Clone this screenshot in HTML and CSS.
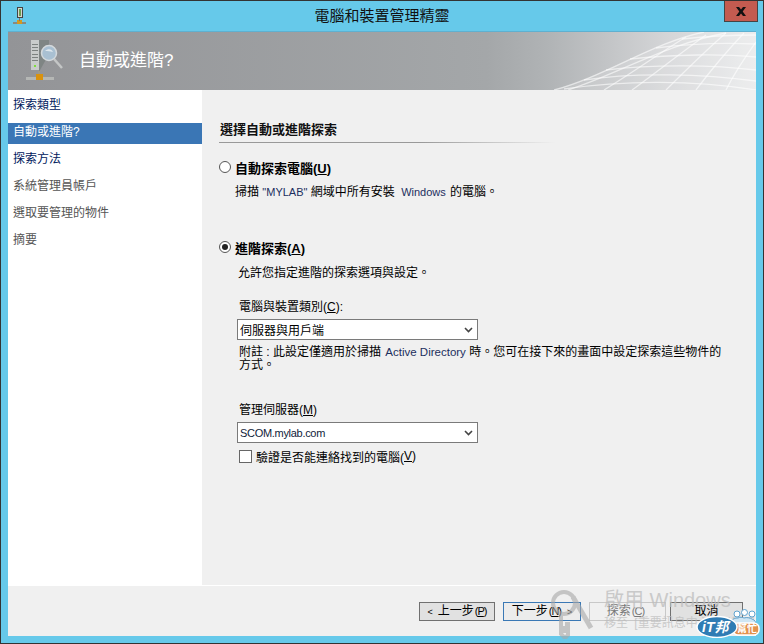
FILE: index.html
```html
<!DOCTYPE html>
<html lang="zh-Hant">
<head>
<meta charset="utf-8">
<title>電腦和裝置管理精靈</title>
<link rel="stylesheet" href="styles.css">
</head>
<body>
<div class="window">
  <div class="titlebar">
    <svg class="app-icon" width="14" height="18" viewBox="0 0 14 18">
      <rect x="4.500" y="0.500" width="5" height="10" fill="#d8d8d0" stroke="#444"/>
      <rect x="6" y="2" width="2" height="7" fill="#6a9a50"/>
      <rect x="0" y="15" width="13" height="2" fill="#8a8a80"/>
      <rect x="4" y="13" width="5" height="4" fill="#d49a20"/>
      <rect x="6" y="11" width="1" height="3" fill="#777"/>
    </svg>
    <div class="title">電腦和裝置管理精靈</div>
    <div class="close"><svg width="12" height="9" viewBox="0 0 12 9"><path d="M1 0h3l2 2.500L8 0h3L7.700 4.500 11 9H8L6 6.500 4 9H1l3.300-4.500z" fill="#111"/></svg></div>
  </div>
  <div class="client">
    <header class="banner">
      <svg class="banner-icon" width="38" height="44" viewBox="0 0 38 44">
        <path d="M5 0h8v30H5z" fill="#c9cccb"/>
        <path d="M13 0h10v14L13 32z" fill="#7f8584"/>
        <g fill="#7d8280"><rect x="6" y="4" width="6" height="1"/><rect x="6" y="7" width="6" height="1"/><rect x="6" y="10" width="6" height="1"/><rect x="6" y="14" width="6" height="1"/><rect x="6" y="17" width="6" height="1"/><rect x="6" y="20" width="6" height="1"/></g>
        <rect x="8" y="25" width="2" height="2" fill="#7ee03a"/>
        <path d="M28 19l8 9" stroke="#c4c6c6" stroke-width="2.500"/>
        <circle cx="23" cy="13" r="7.500" fill="#a9c0d2" stroke="#d4d9dc" stroke-width="1.500"/>
        <path d="M19 11c3-3 7-2 8 1-3-1-5-1-8-1z" fill="#dfe8ee"/>
        <rect x="12" y="31" width="2" height="6" fill="#a09a86"/>
        <rect x="0" y="37" width="28" height="3" fill="#b5b7b5"/>
        <rect x="10" y="34" width="7" height="6" fill="#d9920e"/>
      </svg>
      <h1 class="banner-title">自動或進階?</h1>
      <svg class="mesh" width="202" height="58" viewBox="0 0 202 58" fill="none" stroke="#fff">
        <path d="M0 58C50 45 100 10 150 0H202V58z" fill="#fff" fill-opacity=".16" stroke="none"/>
        <g stroke-opacity=".6" stroke-width="1.300">
          <path d="M0 58C50 45 100 10 150 0"/>
          <path d="M14 58C60 44 112 12 172 1"/>
          <path d="M10 57C70 48 140 48 202 58"/>
          <path d="M30 48C80 40 150 42 202 49"/>
          <path d="M52 38C100 32 160 33 202 38"/>
          <path d="M76 27C120 22 170 22 202 25"/>
          <path d="M102 16C140 11 180 11 202 12"/>
          <path d="M128 7C155 4 185 3 202 3"/>
          <path d="M50 58C80 40 110 18 132 5"/>
          <path d="M78 58C100 42 128 20 152 3"/>
          <path d="M112 58C128 42 150 20 172 1"/>
          <path d="M142 58C154 42 172 20 190 1"/>
          <path d="M172 58C180 42 192 24 202 10"/>
        </g>
      </svg>
    </header>
    <div class="body">
      <nav class="nav">
        <div class="nav-item active">探索類型</div>
        <div class="nav-item selected">自動或進階?</div>
        <div class="nav-item active">探索方法</div>
        <div class="nav-item">系統管理員帳戶</div>
        <div class="nav-item">選取要管理的物件</div>
        <div class="nav-item">摘要</div>
      </nav>
      <main class="main">
        <h2 class="section-title">選擇自動或進階探索</h2>
        <div class="section-rule"></div>
        <label class="radio-row first"><span class="radio"></span><b>自動探索電腦(<u>U</u>)</b></label>
        <p class="desc">掃描 <span class="latin">"MYLAB"</span> 網域中所有安裝 <span class="latin win">Windows</span> 的電腦。</p>
        <label class="radio-row second"><span class="radio on"></span><b>進階探索(<u>A</u>)</b></label>
        <p class="desc indent">允許您指定進階的探索選項與設定。</p>
        <div class="field-label category">電腦與裝置類別(<u>C</u>):</div>
        <div class="select"><span>伺服器與用戶端</span><svg width="9" height="6" viewBox="0 0 9 6"><path d="M1 1l3.500 3.500L8 1" fill="none" stroke="#444" stroke-width="1.600"/></svg></div>
        <p class="note">附註 : 此設定僅適用於掃描 <span class="latin ad">Active Directory</span> 時。您可在接下來的畫面中設定探索這些物件的方式。</p>
        <div class="field-label server">管理伺服器(<u>M</u>)</div>
        <div class="select"><span class="select-latin">SCOM.mylab.com</span><svg width="9" height="6" viewBox="0 0 9 6"><path d="M1 1l3.500 3.500L8 1" fill="none" stroke="#444" stroke-width="1.600"/></svg></div>
        <label class="check-row"><span class="check"></span>驗證是否能連絡找到的電腦(<u>V</u>)</label>
      </main>
    </div>
    <footer class="footer">
      <button class="btn back"><span class="angle">&lt;</span>上一步<span class="key">(<u>P</u>)</span></button>
      <button class="btn next">下一步<span class="key">(<u>N</u>)</span><span class="angle after">&gt;</span></button>
      <button class="btn disabled">探索<span class="key">(<u>C</u>)</span></button>
      <button class="btn cancel">取消</button>
    </footer>
  </div>
  <svg class="wm-key" width="50" height="50" viewBox="0 0 50 50" fill="none" stroke="#a8a8a8" stroke-width="4">
    <circle cx="17" cy="14" r="11"/>
    <path d="M14 25v20l4 4 3-3v-4h-3v-3h3v-4h-3"/>
    <path d="M26 8l18 31" stroke-width="5"/>
  </svg>
  <div class="watermark"><div class="wm-main">啟用 Windows</div><div class="wm-sub">移至 [重要訊息中心] 以啟用 Windows</div></div>
  <div class="logo">
    <svg width="68" height="30" viewBox="0 0 68 30">
      <g fill="#fff" stroke="#5fa3cf"><circle cx="42" cy="6" r="3"/><circle cx="49.500" cy="4.500" r="3"/><circle cx="57" cy="6" r="3"/></g>
      <path d="M36 16c0-5 4-6 7-6 2-1 4-1 6 0 3-1 6 0 8 1 3 1 4 3 4 6H36z" fill="#cfe6f4" stroke="#5fa3cf"/>
      <rect x="38" y="15" width="26" height="12" rx="5" fill="#e3914d" stroke="#fff" stroke-width="1.500"/>
      <ellipse cx="22" cy="19" rx="20" ry="10.500" fill="#2f7cb4" stroke="#fff" stroke-width="1.500"/>
    </svg>
    <span class="logo-it">iT邦</span><span class="logo-help">幫忙</span>
  </div>
</div>
</body>
</html>
```
FILE: styles.css
```css
* { box-sizing: border-box; }
html, body { margin: 0; padding: 0; }
body { width: 764px; height: 644px; overflow: hidden; font-family: "Liberation Sans", "Noto Sans CJK TC", sans-serif; font-size: 12px; color: #000; }
.window { position: relative; width: 764px; height: 644px; background: #66c9ea; border: 1px solid #333; display: flex; flex-direction: column; overflow: hidden; }
.titlebar { height: 30px; flex: none; display: flex; align-items: flex-start; position: relative; }
.app-icon { margin: 6px 0 0 12px; flex: none; }
.title { position: absolute; left: 0; right: 0; top: 4px; text-align: center; font-size: 15px; line-height: 22px; color: #111; }
.close { position: absolute; top: -1px; right: 5px; width: 34px; height: 22px; background: #c35b50; border: 1px solid #444; display: flex; align-items: center; justify-content: center; }
.client { margin: 0 7px; height: 605px; flex: none; display: flex; flex-direction: column; background: #f0f0f0; border-top: 1px solid #5fb0d0; }
.banner { position: relative; height: 58px; flex: none; display: flex; align-items: center; background: linear-gradient(90deg, #939497 0%, #a4a7a9 64%, #b0b3b5 72%, #d4d5d7 88%, #e9eaeb 100%); overflow: hidden; }
.banner-icon { margin: 0 0 0 18px; flex: none; position: relative; top: 1px; }
.banner-title { margin: 0 0 0 15px; font-size: 17px; line-height: 24px; font-weight: 400; color: #fff; position: relative; }
.mesh { position: absolute; right: 0; top: 0; }
.body { flex: 1; display: flex; min-height: 0; }
.nav { width: 194px; flex: none; background: #fff; padding-top: 6px; display: flex; flex-direction: column; gap: 6px; }
.nav-item { height: 21px; padding: 1px 5px 0; line-height: 16px; color: #555; }
.nav-item.active { color: #00205c; }
.nav-item.selected { background: #3a76b5; color: #fff; }
.main { flex: 1; padding: 31px 0 0 17px; }
.section-title { margin: 0 0 0 1px; font-size: 13px; font-weight: 700; line-height: 18px; color: #111; }
.section-rule { width: 336px; height: 1px; margin-top: 3px; background: linear-gradient(90deg, #999, #999 60%, #f0f0f0); }
.radio-row { display: flex; align-items: center; height: 18px; font-size: 13px; }
.radio-row.first { margin-top: 15px; }
.radio-row.second { margin-top: 37px; }
.radio-row b { margin-left: 4px; }
.radio { width: 12px; height: 12px; border-radius: 50%; border: 1px solid #555; background: #fff; position: relative; flex: none; }
.radio.on::after { content: ""; position: absolute; left: 2px; top: 2px; width: 6px; height: 6px; border-radius: 50%; background: #222; }
.desc { margin: 7px 0 0 16px; line-height: 18px; }
.desc.indent { margin: 8px 0 0 19px; }
.latin { font-size: 11px; color: #1c2f5e; }
.latin.win { margin: 0 1px 0 3px; }
.latin.ad { font-size: 11.500px; margin-left: 1px; }
.select-latin { font-size: 11px; letter-spacing: -.3px; color: #101c3a; }
.field-label { margin-left: 20px; line-height: 18px; }
.field-label.category { margin-top: 16px; }
.field-label.server { margin-top: 29px; }
.select { width: 241px; height: 21px; margin: 3px 0 0 18px; background: #fff; border: 1px solid #7a7a7a; display: flex; align-items: center; justify-content: space-between; padding: 0 4px 0 2px; }
.note { width: 490px; margin: 6px 0 0 20px; line-height: 13px; }
.check-row { display: flex; align-items: center; height: 18px; margin: 4px 0 0 20px; }
.check { width: 13px; height: 13px; background: #fff; border: 1px solid #666; margin-right: 4px; flex: none; }
.footer { height: 51px; flex: none; border-top: 1px solid #fff; background: #f0f0f0; position: relative; padding: 16px 0 0 411px; display: flex; align-items: flex-start; }
.btn { height: 19px; padding: 0; font: inherit; line-height: 15px; background: #e1e1e1; border: 1px solid #707070; color: #000; }
.key { font-size: 11px; letter-spacing: -1px; margin-left: 1px; }
.angle { font-size: 9px; margin-right: 5px; }
.angle.after { margin: 0 0 0 6px; }
.back { width: 76px; }
.next { width: 78px; margin-left: 8px; border-color: #3a78b5; background: #ececec; }
.disabled { width: 77px; margin-left: 8px; padding-right: 4px; background: #f0f0f0; border-color: #c8c8c8; color: #777; }
.cancel { width: 73px; margin-left: 4px; }
.wm-key { position: absolute; left: 546px; top: 588px; opacity: .6; }
.watermark { position: absolute; left: 603px; top: 587px; width: 158px; white-space: nowrap; overflow: hidden; color: #bdbdbd; opacity: .75; }
.wm-main { font-size: 20px; line-height: 24px; }
.wm-sub { font-size: 12px; line-height: 16px; margin-top: 3px; word-spacing: 3px; }
.logo { position: absolute; left: 694px; top: 607px; width: 68px; height: 30px; }
.logo svg { display: block; }
.logo-it { position: absolute; left: 7px; top: 10px; font: italic 700 14px/18px "Liberation Sans", "Noto Sans CJK TC", sans-serif; color: #fff; }
.logo-help { position: absolute; left: 42px; top: 14px; font-size: 10px; line-height: 14px; font-weight: 700; color: #fff; }
```
